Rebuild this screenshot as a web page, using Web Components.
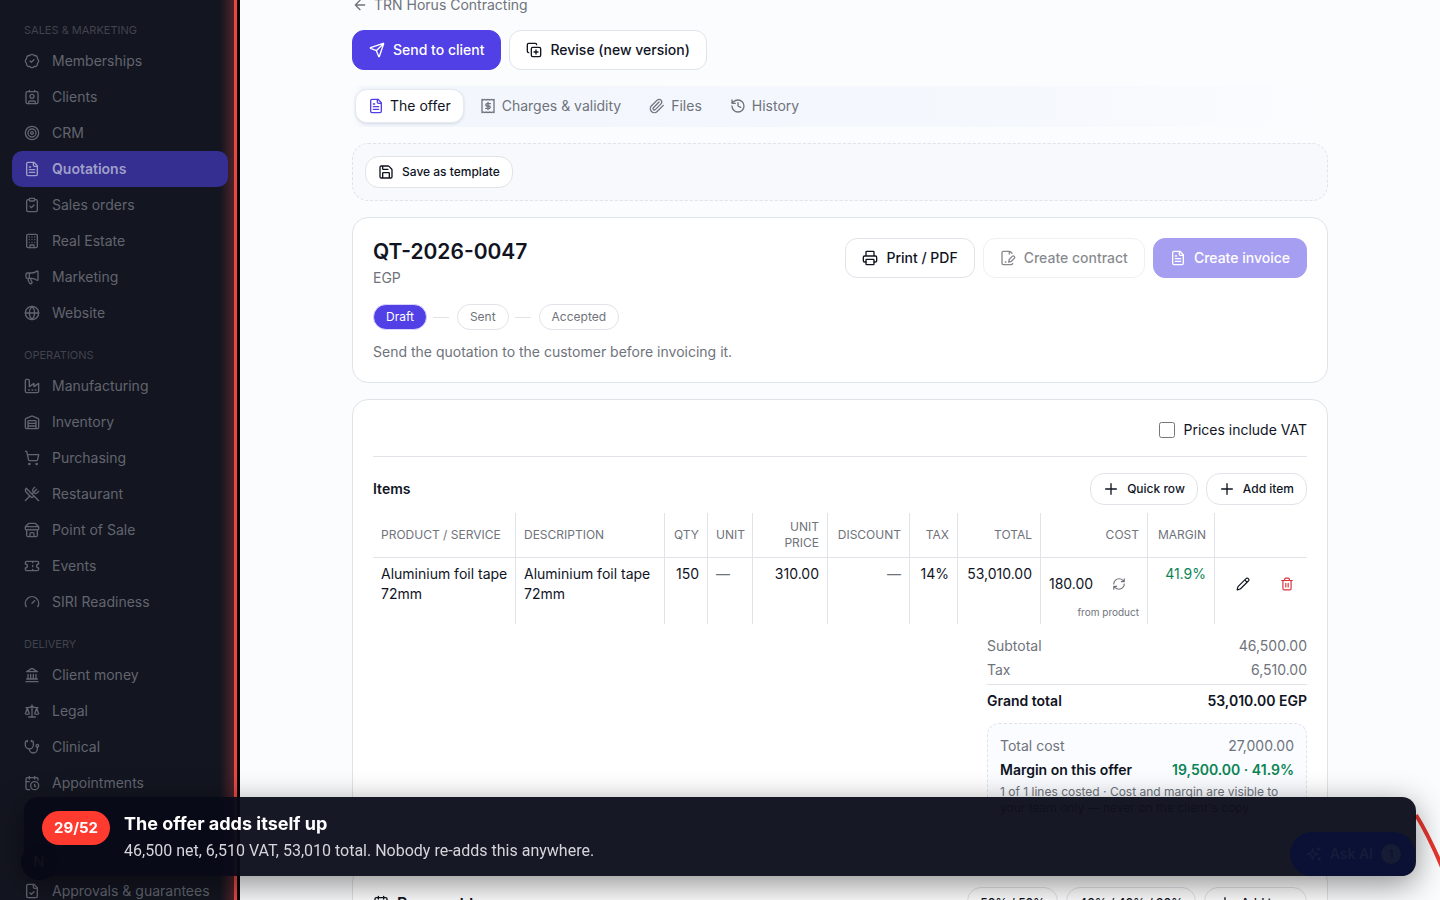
<!DOCTYPE html>
<html lang="en">
<head>
<meta charset="utf-8">
<meta name="viewport" content="width=device-width, initial-scale=1">
<title>QT-2026-0047</title>
<style>
	:root {
		--primary: #5040e5;
		--ink: #10141f;
		--muted: #6f737b;
		--line: #e0e3e8;
		--page: #fbfcfe;
		--green: #0b8455;
		--red: #ff3b30;
	}
	body {
		margin: 0;
		height: 100vh;
		overflow: hidden;
		font: 400 14px/20px Inter, "Liberation Sans", sans-serif;
		color: var(--ink);
		background: var(--page);
	}
</style>
</head>
<body>

<app-shell>
	<side-nav slot="nav">
		<nav-group label="Sales &amp; Marketing">
			<nav-item icon="badge">Memberships</nav-item>
			<nav-item icon="contact">Clients</nav-item>
			<nav-item icon="target">CRM</nav-item>
			<nav-item icon="file" active>Quotations</nav-item>
			<nav-item icon="clipboard">Sales orders</nav-item>
			<nav-item icon="building">Real Estate</nav-item>
			<nav-item icon="megaphone">Marketing</nav-item>
			<nav-item icon="globe">Website</nav-item>
		</nav-group>
		<nav-group label="Operations">
			<nav-item icon="factory">Manufacturing</nav-item>
			<nav-item icon="warehouse">Inventory</nav-item>
			<nav-item icon="cart">Purchasing</nav-item>
			<nav-item icon="utensils">Restaurant</nav-item>
			<nav-item icon="store">Point of Sale</nav-item>
			<nav-item icon="ticket">Events</nav-item>
			<nav-item icon="gauge">SIRI Readiness</nav-item>
		</nav-group>
		<nav-group label="Delivery">
			<nav-item icon="landmark">Client money</nav-item>
			<nav-item icon="scale">Legal</nav-item>
			<nav-item icon="stethoscope">Clinical</nav-item>
			<nav-item icon="calclock">Appointments</nav-item>
			<nav-gap></nav-gap>
			<nav-item icon="filecheck">Approvals &amp; guarantees</nav-item>
		</nav-group>
	</side-nav>
	<quote-page></quote-page>
</app-shell>
<tour-toast step="29/52">
	<span slot="title">The offer adds itself up</span>
	46,500 net, 6,510 VAT, 53,010 total. Nobody re-adds this anywhere.
</tour-toast>

<script>
const ICONS = {
	badge: '<path d="M3.85 8.62a4 4 0 0 1 4.78-4.77 4 4 0 0 1 6.74 0 4 4 0 0 1 4.78 4.78 4 4 0 0 1 0 6.74 4 4 0 0 1-4.77 4.78 4 4 0 0 1-6.75 0 4 4 0 0 1-4.78-4.77 4 4 0 0 1 0-6.76Z"/><path d="m9 12 2 2 4-4"/>',
	contact: '<path d="M16 2v2M8 2v2M7 22v-2a2 2 0 0 1 2-2h6a2 2 0 0 1 2 2v2"/><circle cx="12" cy="11" r="3"/><rect x="3" y="4" width="18" height="18" rx="2"/>',
	target: '<circle cx="12" cy="12" r="10"/><circle cx="12" cy="12" r="6"/><circle cx="12" cy="12" r="2"/>',
	file: '<path d="M15 2H6a2 2 0 0 0-2 2v16a2 2 0 0 0 2 2h12a2 2 0 0 0 2-2V7Z"/><path d="M14 2v4a2 2 0 0 0 2 2h4M10 9H8M16 13H8M16 17H8"/>',
	clipboard: '<rect x="8" y="2" width="8" height="4" rx="1"/><path d="M16 4h2a2 2 0 0 1 2 2v14a2 2 0 0 1-2 2H6a2 2 0 0 1-2-2V6a2 2 0 0 1 2-2h2M9 14l2 2 4-4"/>',
	building: '<rect x="4" y="2" width="16" height="20" rx="2"/><path d="M9 22v-4h6v4M8 6h.01M16 6h.01M12 6h.01M12 10h.01M12 14h.01M16 10h.01M16 14h.01M8 10h.01M8 14h.01"/>',
	megaphone: '<path d="M11 6a13 13 0 0 0 8.4-2.8A1 1 0 0 1 21 4v12a1 1 0 0 1-1.6.8A13 13 0 0 0 11 14H5a2 2 0 0 1-2-2V8a2 2 0 0 1 2-2zM6 14a12 12 0 0 0 2.4 7.2 2 2 0 0 0 3.2-2.4A8 8 0 0 1 10 14M8 6v8"/>',
	globe: '<circle cx="12" cy="12" r="10"/><path d="M12 2a14.5 14.5 0 0 0 0 20 14.5 14.5 0 0 0 0-20M2 12h20"/>',
	factory: '<path d="M2 20a2 2 0 0 0 2 2h16a2 2 0 0 0 2-2V8l-7 5V8l-7 5V4a2 2 0 0 0-2-2H4a2 2 0 0 0-2 2ZM17 18h1M12 18h1M7 18h1"/>',
	warehouse: '<path d="M22 8.35V20a2 2 0 0 1-2 2H4a2 2 0 0 1-2-2V8.35A2 2 0 0 1 3.26 6.5l8-3.2a2 2 0 0 1 1.48 0l8 3.2A2 2 0 0 1 22 8.35ZM6 18h12M6 14h12M6 22V11a1 1 0 0 1 1-1h10a1 1 0 0 1 1 1v11"/>',
	cart: '<circle cx="8" cy="21" r="1"/><circle cx="19" cy="21" r="1"/><path d="M2.05 2.05h2l2.66 12.42a2 2 0 0 0 2 1.58h9.78a2 2 0 0 0 1.95-1.57l1.65-7.43H5.12"/>',
	utensils: '<path d="m16 2-2.3 2.3a3 3 0 0 0 0 4.2l1.8 1.8a3 3 0 0 0 4.2 0L22 8M15 15 3.3 3.3a4.2 4.2 0 0 0 0 6l7.3 7.3c.7.7 2 .7 2.8 0L15 15Zm0 0 7 7M2.1 21.8l6.4-6.3M19 5l-7 7"/>',
	store: '<path d="m2 7 4.41-4.41A2 2 0 0 1 7.83 2h8.34a2 2 0 0 1 1.42.59L22 7M4 12v8a2 2 0 0 0 2 2h12a2 2 0 0 0 2-2v-8M15 22v-4a2 2 0 0 0-2-2h-2a2 2 0 0 0-2 2v4M2 7h20M22 7v3a2 2 0 0 1-2 2 2.7 2.7 0 0 1-1.59-.63.7.7 0 0 0-.82 0A2.7 2.7 0 0 1 16 12a2.7 2.7 0 0 1-1.59-.63.7.7 0 0 0-.82 0A2.7 2.7 0 0 1 12 12a2.7 2.7 0 0 1-1.59-.63.7.7 0 0 0-.82 0A2.7 2.7 0 0 1 8 12a2.7 2.7 0 0 1-1.59-.63.7.7 0 0 0-.82 0A2.7 2.7 0 0 1 4 12a2 2 0 0 1-2-2V7"/>',
	ticket: '<path d="M2 9a3 3 0 0 1 0 6v2a2 2 0 0 0 2 2h16a2 2 0 0 0 2-2v-2a3 3 0 0 1 0-6V7a2 2 0 0 0-2-2H4a2 2 0 0 0-2 2ZM13 5v2M13 17v2M13 11v2"/>',
	gauge: '<path d="m12 14 4-4M3.34 19a10 10 0 1 1 17.32 0"/>',
	landmark: '<path d="M3 22h18M6 18v-7M10 18v-7M14 18v-7M18 18v-7M4 18h16M12 2l8 5H4z"/>',
	scale: '<path d="m16 16 3-8 3 8c-.87.65-1.92 1-3 1s-2.13-.35-3-1ZM2 16l3-8 3 8c-.87.65-1.92 1-3 1s-2.13-.35-3-1ZM7 21h10M12 3v18M3 7h2c2 0 5-1 7-2 2 1 5 2 7 2h2"/>',
	stethoscope: '<path d="M11 2v2M5 2v2M5 3H4a2 2 0 0 0-2 2v4a6 6 0 0 0 12 0V5a2 2 0 0 0-2-2h-1M8 15a6 6 0 0 0 12 0v-3"/><circle cx="20" cy="10" r="2"/>',
	calclock: '<path d="M21 7.5V6a2 2 0 0 0-2-2H5a2 2 0 0 0-2 2v14a2 2 0 0 0 2 2h3.5M16 2v4M8 2v4M3 10h5M17.5 17.5 16 16.3V14"/><circle cx="16" cy="16" r="6"/>',
	filecheck: '<path d="M15 2H6a2 2 0 0 0-2 2v16a2 2 0 0 0 2 2h12a2 2 0 0 0 2-2V7Z"/><path d="M14 2v4a2 2 0 0 0 2 2h4M9 15l2 2 4-4"/>',
	back: '<path d="m12 19-7-7 7-7M19 12H5"/>',
	send: '<path d="M14.54 21.69a.5.5 0 0 0 .94-.03l6.5-19a.5.5 0 0 0-.64-.63l-19 6.5a.5.5 0 0 0-.02.94l7.93 3.18a2 2 0 0 1 1.11 1.11zM21.85 2.15l-10.94 10.94"/>',
	copyplus: '<path d="M15 12v6M12 15h6"/><rect x="8" y="8" width="14" height="14" rx="2"/><path d="M4 16a2 2 0 0 1-2-2V4a2 2 0 0 1 2-2h10a2 2 0 0 1 2 2"/>',
	receipt: '<path d="M3 2v20l2-1 2 1 2-1 3 1 3-1 2 1 2-1 2 1V2l-2 1-2-1-2 1-3-1-3 1-2-1-2 1ZM15.5 8.5h-5a1.75 1.75 0 0 0 0 3.5h3a1.75 1.75 0 0 1 0 3.5h-5M12 6.5v11"/>',
	clip: '<path d="m21.44 11.05-9.19 9.19a6 6 0 0 1-8.49-8.49l8.57-8.57A4 4 0 1 1 18 8.84l-8.59 8.57a2 2 0 0 1-2.83-2.83l8.49-8.48"/>',
	history: '<path d="M3 12a9 9 0 1 0 9-9 9.75 9.75 0 0 0-6.74 2.74L3 8M3 3v5h5M12 7v5l4 2"/>',
	save: '<path d="M15.2 3a2 2 0 0 1 1.4.6l3.8 3.8a2 2 0 0 1 .6 1.4V19a2 2 0 0 1-2 2H5a2 2 0 0 1-2-2V5a2 2 0 0 1 2-2zM17 21v-7a1 1 0 0 0-1-1H8a1 1 0 0 0-1 1v7M7 3v4a1 1 0 0 0 1 1h7"/>',
	printer: '<path d="M6 18H4a2 2 0 0 1-2-2v-5a2 2 0 0 1 2-2h16a2 2 0 0 1 2 2v5a2 2 0 0 1-2 2h-2M6 9V3a1 1 0 0 1 1-1h10a1 1 0 0 1 1 1v6"/><rect x="6" y="14" width="12" height="8" rx="1"/>',
	filepen: '<path d="m18 5-2.4-2.4A2 2 0 0 0 14.2 2H5a2 2 0 0 0-2 2v16a2 2 0 0 0 2 2h12a2 2 0 0 0 2-2M14 2v4M8 18h1M18.4 9.6a2 2 0 0 1 3 3L17 17l-4 1 1-4z"/>',
	plus: '<path d="M4 12h16M12 4v16"/>',
	refresh: '<path d="M3 12a9 9 0 0 1 9-9 9.75 9.75 0 0 1 6.74 2.74L21 8M21 3v5h-5M21 12a9 9 0 0 1-9 9 9.75 9.75 0 0 1-6.74-2.74L3 16M8 16H3v5"/>',
	pencil: '<path d="M21.17 6.81a1 1 0 0 0-3.98-3.98L3.84 16.17a2 2 0 0 0-.5.83l-1.32 4.35a.5.5 0 0 0 .62.62l4.35-1.32a2 2 0 0 0 .83-.5zM15 5l4 4"/>',
	trash: '<path d="M3 6h18M19 6v14a2 2 0 0 1-2 2H7a2 2 0 0 1-2-2V6M8 6V4a2 2 0 0 1 2-2h4a2 2 0 0 1 2 2v2M10 11v6M14 11v6"/>',
	calendar: '<path d="M8 2v4M16 2v4M3 10h18"/><rect x="3" y="4" width="18" height="18" rx="2"/>',
	sparkles: '<path d="M10 4l2 6 6 2-6 2-2 6-2-6-6-2 6-2zM19 2v5M16.5 4.5h5M20 17v4M18 19h4"/>'
};

// Small helper: every element gets an open root filled from one string.
class BaseElement extends HTMLElement {
	connectedCallback() {
		if (this.shadowRoot) return;
		this.attachShadow({ mode: 'open' }).innerHTML = this.render();
	}
}

class UiIcon extends BaseElement {
	render() {
		return `
			<style>
				:host { display: inline-flex; flex: none; width: var(--icon-size, 16px); height: var(--icon-size, 16px); }
				svg { width: 100%; height: 100%; fill: none; stroke: currentColor; stroke-width: 2; stroke-linecap: round; stroke-linejoin: round; }
			</style>
			<svg viewBox="0 0 24 24" aria-hidden="true">${ICONS[this.getAttribute('name')] || ''}</svg>
		`;
	}
}

class UiButton extends BaseElement {
	render() {
		const icon = this.getAttribute('icon');
		return `
			<style>
				:host { display: inline-flex; flex: none; }
				button {
					display: inline-flex;
					align-items: center;
					gap: 8px;
					height: 40px;
					padding: 0 16px;
					border: 1px solid var(--line);
					border-radius: 12px;
					background: #fff;
					color: var(--ink);
					font: 500 14px/20px Inter, "Liberation Sans", sans-serif;
					white-space: nowrap;
				}
				:host([primary]) button { background: var(--primary); border-color: var(--primary); color: #fff; }
				:host([small]) button { height: 32px; padding: 0 12px; font-size: 12px; border-radius: 14px; }
				button:disabled { opacity: .5; }
			</style>
			<button type="button" ${this.hasAttribute('disabled') ? 'disabled' : ''}>
				${icon ? `<ui-icon name="${icon}"></ui-icon>` : ''}<slot></slot>
			</button>
		`;
	}
}

class IconButton extends BaseElement {
	render() {
		return `
			<style>
				:host { display: inline-flex; --icon-size: 14px; }
				button { display: flex; align-items: center; justify-content: center; width: 32px; height: 32px; padding: 0; border: 0; background: none; color: inherit; }
			</style>
			<button type="button" aria-label="${this.getAttribute('label')}"><ui-icon name="${this.getAttribute('icon')}"></ui-icon></button>
		`;
	}
}

class AppShell extends BaseElement {
	render() {
		return `
			<style>
				:host { display: flex; height: 100vh; }
				main { flex: 1; min-width: 0; overflow: hidden; }
			</style>
			<slot name="nav"></slot>
			<main><slot></slot></main>
		`;
	}
}

class SideNav extends BaseElement {
	render() {
		return `
			<style>
				:host { display: flex; flex: none; box-sizing: border-box; width: 240px; padding-right: 3px; background: #05050a; }
				nav {
					flex: 1;
					min-width: 0;
					overflow: hidden;
					padding: 6px 6px 0 12px;
					border-right: 3px solid #e94642;
					background: linear-gradient(to right, transparent calc(100% - 14px), rgba(233, 70, 66, .28)), #131520;
				}
			</style>
			<nav aria-label="Modules"><slot></slot></nav>
		`;
	}
}

class NavGroup extends BaseElement {
	render() {
		return `
			<style>
				:host { display: block; }
				h2 { margin: 0; padding: 16px 12px 4px; font-size: 11px; line-height: 17px; font-weight: 400; text-transform: uppercase; color: #41434e; }
			</style>
			<h2>${this.getAttribute('label').replace('&', '&amp;')}</h2>
			<slot></slot>
		`;
	}
}

class NavItem extends BaseElement {
	render() {
		return `
			<style>
				:host { display: block; }
				a { display: flex; align-items: center; gap: 12px; height: 36px; padding: 0 12px; border-radius: 10px; color: #62656f; text-decoration: none; white-space: nowrap; }
				:host([active]) a { background: #342f90; color: #a09fca; font-weight: 600; }
			</style>
			<a href="#" ${this.hasAttribute('active') ? 'aria-current="page"' : ''}><ui-icon name="${this.getAttribute('icon')}"></ui-icon><slot></slot></a>
		`;
	}
}

class NavGap extends BaseElement {
	render() {
		return '<style>:host { display: block; height: 72px; }</style>';
	}
}

class UiCard extends BaseElement {
	render() {
		return `
			<style>
				:host { display: block; padding: 20px; border: 1px solid var(--line); border-radius: 16px; background: #fff; }
			</style>
			<slot></slot>
		`;
	}
}

class TabBar extends BaseElement {
	render() {
		const tabs = [['file', 'The offer'], ['receipt', 'Charges &amp; validity'], ['clip', 'Files'], ['history', 'History']];
		return `
			<style>
				:host {
					display: flex;
					gap: 4px;
					padding: 3px 3px 4px;
					background: linear-gradient(to right, transparent, #f2f6fd 12px, #f5f8fd 70%, transparent calc(100% - 8px));
				}
				button { display: flex; align-items: center; gap: 6px; height: 34px; padding: 0 11px; border: 1px solid transparent; border-radius: 12px; background: none; color: var(--muted); font: 400 14px/20px Inter, "Liberation Sans", sans-serif; }
				button[aria-selected="true"] { padding: 0 12px; background: #fff; border-color: #e6e9f0; color: var(--ink); box-shadow: 0 1px 3px rgba(20, 25, 50, .12); }
				[aria-selected="true"] ui-icon { color: var(--primary); }
			</style>
			${tabs.map(([icon, text], i) => `<button type="button" role="tab" aria-selected="${i === 0}"><ui-icon name="${icon}"></ui-icon>${text}</button>`).join('')}
		`;
	}
}

class StatusSteps extends BaseElement {
	render() {
		return `
			<style>
				:host { display: block; }
				ol { display: flex; align-items: center; gap: 6px; margin: 0; padding: 0; list-style: none; font-size: 12px; line-height: 16px; color: var(--muted); }
				li { padding: 4px 12px; border: 1px solid var(--line); border-radius: 13px; }
				li.on { background: var(--primary); border-color: #d9d6fa; color: #fff; }
				li.bar { width: 16px; height: 1px; margin-right: 2px; padding: 0; border: 0; border-radius: 0; background: var(--line); }
			</style>
			<ol>
				<li class="on">Draft</li><li class="bar" role="presentation"></li>
				<li>Sent</li><li class="bar" role="presentation"></li>
				<li>Accepted</li>
			</ol>
		`;
	}
}

class ItemsTable extends BaseElement {
	render() {
		return `
			<style>
				:host { display: block; }
				table { width: 100%; table-layout: fixed; border-collapse: separate; border-spacing: 0; }
				th, td { border-right: 1px solid var(--line); text-align: left; }
				th:last-child, td:last-child { border-right: 0; }
				th { height: 32px; padding: 6px 0 6px 8px; border-bottom: 1px solid var(--line); font-size: 12px; line-height: 16px; font-weight: 400; text-transform: uppercase; color: var(--muted); }
				td { height: 52px; padding: 6px 4px 8px 8px; vertical-align: top; }
				td:nth-child(n+3) { white-space: nowrap; }
				.num { text-align: right; padding-right: 8px; }
				td.num { padding-left: 0; }
				.dim { color: var(--muted); }
				.good { color: var(--green); }
				.cost { display: flex; align-items: center; justify-content: space-between; }
				.cost input { width: 52px; padding: 0; border: 0; background: none; color: inherit; font: inherit; }
				td.cell { padding: 10px 8px 4px; }
				.cost icon-button { color: var(--muted); margin-right: 4px; }
				small { display: block; font-size: 10px; line-height: 16px; padding-top: 4px; text-align: right; color: var(--muted); }
				.acts { display: flex; justify-content: space-between; }
				td.actcell { padding: 10px 4px 4px 12px; }
				.del { color: #dc2f3c; }
			</style>
			<table>
				<colgroup>
					<col style="width:143px"><col style="width:149px"><col style="width:43px"><col style="width:45px">
					<col style="width:75px"><col style="width:82px"><col style="width:48px"><col style="width:83px">
					<col style="width:107px"><col style="width:67px"><col>
				</colgroup>
				<thead>
					<tr>
						<th>Product / Service</th><th>Description</th><th class="num">Qty</th><th>Unit</th>
						<th class="num">Unit price</th><th class="num">Discount</th><th class="num">Tax</th><th class="num">Total</th>
						<th class="num">Cost</th><th class="num">Margin</th><th aria-label="Actions"></th>
					</tr>
				</thead>
				<tbody>
					<tr>
						<td>Aluminium foil tape 72mm</td>
						<td>Aluminium foil tape 72mm</td>
						<td class="num">150</td>
						<td class="dim">—</td>
						<td class="num">310.00</td>
						<td class="num dim">—</td>
						<td class="num">14%</td>
						<td class="num">53,010.00</td>
						<td class="cell">
							<div class="cost"><input type="text" value="180.00" aria-label="Cost"><icon-button icon="refresh" label="Refresh cost"></icon-button></div>
							<small>from product</small>
						</td>
						<td class="num good">41.9%</td>
						<td class="actcell"><div class="acts"><icon-button icon="pencil" label="Edit"></icon-button><icon-button class="del" icon="trash" label="Delete"></icon-button></div></td>
					</tr>
				</tbody>
			</table>
		`;
	}
}

class OfferTotals extends BaseElement {
	render() {
		return `
			<style>
				:host { display: flex; flex-direction: column; gap: 4px; width: 320px; margin: 12px 0 0 auto; }
				div { display: flex; justify-content: space-between; color: var(--muted); }
				.grand { border-top: 1px solid var(--line); padding-top: 6px; color: var(--ink); font-weight: 600; }
				section { display: flex; flex-direction: column; gap: 4px; margin-top: 8px; padding: 12px; border: 1px dashed var(--line); border-radius: 12px; background: #fafcff; }
				.margin { color: var(--ink); font-weight: 600; }
				.margin b { font-weight: 600; color: var(--green); }
				p { margin: 0; font-size: 12px; line-height: 16px; color: var(--muted); }
			</style>
			<div><span>Subtotal</span><span>46,500.00</span></div>
			<div><span>Tax</span><span>6,510.00</span></div>
			<div class="grand"><span>Grand total</span><span>53,010.00 EGP</span></div>
			<section>
				<div><span>Total cost</span><span>27,000.00</span></div>
				<div class="margin"><span>Margin on this offer</span><b>19,500.00 · 41.9%</b></div>
				<p>1 of 1 lines costed · Cost and margin are visible to your team only — never on the client's copy.</p>
			</section>
		`;
	}
}

class QuotePage extends BaseElement {
	render() {
		return `
			<style>
				:host { display: block; }
				.page { max-width: 976px; margin: 0 auto; padding: 24px 48px; display: flex; flex-direction: column; gap: 16px; }
				.row { display: flex; align-items: center; gap: 8px; }
				.between { justify-content: space-between; }
				.back { display: flex; align-items: center; gap: 6px; color: var(--muted); text-decoration: none; }
				.lead { display: flex; flex-direction: column; gap: 15px; }
				.tools { display: flex; padding: 12px; border: 1px dashed var(--line); border-radius: 16px; background: #f8f9fd; }
				.head { display: flex; justify-content: space-between; align-items: flex-start; }
				h1 { margin: 0 0 2px; font-size: 21px; line-height: 28px; font-weight: 600; }
				h2 { margin: 0; font-size: 14px; line-height: 20px; font-weight: 600; }
				.pay h2 { font-size: 16px; }
				.muted { margin: 0; color: var(--muted); }
				status-steps { margin: 16px 0 12px; }
				.vat { justify-content: flex-end; height: 20px; padding-bottom: 16px; border-bottom: 1px solid var(--line); margin-bottom: 16px; }
				.vat label { display: flex; align-items: center; gap: 8px; }
				.vat input { width: 16px; height: 16px; margin: 0; }
				items-table { margin-top: 8px; }
			</style>
			<div class="page">
				<div class="lead">
					<a class="back" href="#"><ui-icon name="back"></ui-icon>TRN Horus Contracting</a>
					<div class="row">
						<ui-button primary icon="send">Send to client</ui-button>
						<ui-button icon="copyplus">Revise (new version)</ui-button>
					</div>
				</div>
				<tab-bar role="tablist"></tab-bar>
				<div class="tools"><ui-button small icon="save">Save as template</ui-button></div>
				<ui-card>
					<div class="head">
						<div>
							<h1>QT-2026-0047</h1>
							<p class="muted">EGP</p>
						</div>
						<div class="row">
							<ui-button icon="printer">Print / PDF</ui-button>
							<ui-button icon="filepen" disabled>Create contract</ui-button>
							<ui-button primary icon="file" disabled>Create invoice</ui-button>
						</div>
					</div>
					<status-steps></status-steps>
					<p class="muted">Send the quotation to the customer before invoicing it.</p>
				</ui-card>
				<ui-card>
					<div class="row vat"><label><input type="checkbox">Prices include VAT</label></div>
					<div class="row between">
						<h2>Items</h2>
						<div class="row">
							<ui-button small icon="plus">Quick row</ui-button>
							<ui-button small icon="plus">Add item</ui-button>
						</div>
					</div>
					<items-table></items-table>
					<offer-totals></offer-totals>
				</ui-card>
				<ui-card class="pay">
					<div class="row between">
						<div class="row"><ui-icon name="calendar"></ui-icon><h2>Payment terms</h2></div>
						<div class="row">
							<ui-button small>50% / 50%</ui-button>
							<ui-button small>40% / 40% / 20%</ui-button>
							<ui-button small icon="plus">Add term</ui-button>
						</div>
					</div>
				</ui-card>
			</div>
		`;
	}

	connectedCallback() {
		super.connectedCallback();
		const scroller = this.assignedSlot && this.assignedSlot.parentElement;
		if (scroller) scroller.scrollTop = 29;
	}
}

class TourToast extends BaseElement {
	render() {
		return `
			<style>
				:host { display: block; }
				.arc { position: fixed; right: 0; bottom: 0; width: 32px; height: 100px; fill: none; stroke: #e8372e; stroke-width: 4; }
				.toast {
					position: fixed;
					left: 24px;
					right: 24px;
					bottom: 24px;
					display: flex;
					align-items: flex-start;
					gap: 14px;
					padding: 14px 18px;
					border-radius: 14px;
					background: rgba(9, 10, 23, .94);
					box-shadow: 0 8px 32px rgba(0, 0, 0, .45);
					color: #fff;
				}
				.step { padding: 0 12px; border-radius: 17px; background: var(--red); font-size: 15px; line-height: 34px; font-weight: 700; }
				h3 { margin: 0 0 3px; font-size: 18px; line-height: 26px; font-weight: 700; }
				p { margin: 0; font: 400 16px/22px Roboto, "Liberation Sans", sans-serif; color: #d5d6dc; }
				.ask {
					position: fixed;
					right: 25px;
					bottom: 24px;
					display: flex;
					align-items: center;
					gap: 8px;
					height: 44px;
					padding: 0 14px 0 16px;
					border: 0;
					border-radius: 22px 22px 14px 22px;
					background: #0a1135;
					color: #161c3a;
					font: 600 14px/20px Inter, "Liberation Sans", sans-serif;
				}
				.ask i { width: 20px; border-radius: 10px; background: #161c34; color: #0a1135; font-style: normal; font-size: 11px; text-align: center; }
				.dev { position: fixed; left: 21px; bottom: 20px; width: 36px; height: 36px; padding: 0; border: 0; border-radius: 18px; background: #080916; color: #10121c; font: 500 15px/36px Inter, "Liberation Sans", sans-serif; }
			</style>
			<svg class="arc" viewBox="0 0 32 100" aria-hidden="true"><path d="M8 15Q20 34 34 67"/></svg>
			<div class="toast" role="status">
				<span class="step">${this.getAttribute('step')}</span>
				<div>
					<h3><slot name="title"></slot></h3>
					<p><slot></slot></p>
				</div>
			</div>
			<button class="dev" type="button">N</button>
			<button class="ask" type="button"><ui-icon name="sparkles"></ui-icon>Ask AI<i>1</i></button>
		`;
	}
}

customElements.define('ui-icon', UiIcon);
customElements.define('ui-button', UiButton);
customElements.define('icon-button', IconButton);
customElements.define('app-shell', AppShell);
customElements.define('side-nav', SideNav);
customElements.define('nav-group', NavGroup);
customElements.define('nav-item', NavItem);
customElements.define('nav-gap', NavGap);
customElements.define('ui-card', UiCard);
customElements.define('tab-bar', TabBar);
customElements.define('status-steps', StatusSteps);
customElements.define('items-table', ItemsTable);
customElements.define('offer-totals', OfferTotals);
customElements.define('quote-page', QuotePage);
customElements.define('tour-toast', TourToast);
</script>
</body>
</html>
